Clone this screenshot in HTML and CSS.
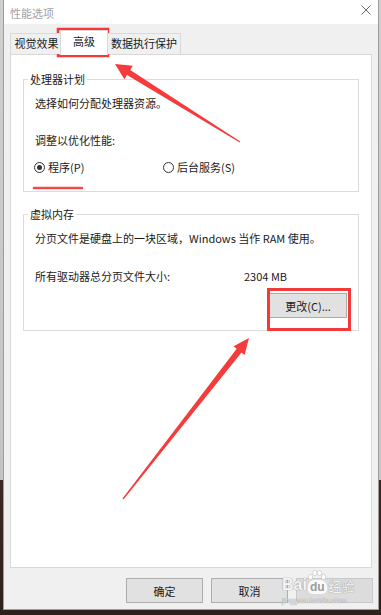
FILE: index.html
```html
<!DOCTYPE html>
<html lang="zh-CN">
<head>
    <meta charset="UTF-8">
    <title>性能选项</title>
    <link rel="stylesheet" href="styles.css">
</head>
<body>
    <div class="screen">
        <div class="window">
            <div class="titlebar">
                <span class="title">性能选项</span>
                <svg class="closebtn" width="10" height="10" viewBox="0 0 10 10">
                    <path d="M0.5 0.5 L9.5 9.5 M9.5 0.5 L0.5 9.5" stroke="#6a6a6a" stroke-width="1" fill="none"/>
                </svg>
            </div>
            <div class="dialog">
                <div class="tabs">
                    <div class="tab tab1">视觉效果</div>
                    <div class="tab tab2 active">高级</div>
                    <div class="tab tab3">数据执行保护</div>
                </div>
                <div class="panel">
                    <fieldset class="group group1">
                        <legend>处理器计划</legend>
                        <p class="line first">选择如何分配处理器资源。</p>
                        <p class="line gap21">调整以优化性能:</p>
                        <div class="radios">
                            <label class="radio radio-first"><span class="dot checked"></span>程序(P)</label>
                            <label class="radio"><span class="dot"></span>后台服务(S)</label>
                        </div>
                    </fieldset>
                    <fieldset class="group group2">
                        <legend>虚拟内存</legend>
                        <p class="line first">分页文件是硬盘上的一块区域，Windows 当作 RAM 使用。</p>
                        <div class="sizerow">
                            <span class="sizelabel">所有驱动器总分页文件大小:</span>
                            <span>2304 MB</span>
                        </div>
                        <div class="btnrow">
                            <button class="btn">更改(C)...</button>
                        </div>
                    </fieldset>
                </div>
                <div class="footer">
                    <button class="btn">确定</button>
                    <button class="btn">取消</button>
                    <button class="btn disabled"></button>
                </div>
            </div>
        </div>

        <svg class="marks" width="381" height="615" viewBox="0 0 381 615">
            <rect x="58" y="29" width="50" height="27" fill="none" stroke="#f23a3a" stroke-width="2.5"/>
            <rect x="268.5" y="289.5" width="81" height="40" fill="none" stroke="#f23a3a" stroke-width="3"/>
            <polygon fill="#f53b3b" points="115,64 132.8,65.7 130.2,69.9 240.3,141.6 239.7,142.4 127,75 124.4,79.3"/>
            <polygon fill="#f53b3b" points="249,338 244.6,354.9 241.5,352.4 123.5,499.4 122.5,498.6 236.7,348.8 233.6,346.3"/>
            <line x1="34" y1="188" x2="82" y2="188" stroke="#f54848" stroke-width="2.5" stroke-linecap="round"/>
        </svg>

        <div class="watermark">
            <div class="wm-top">
                <span>Bai</span>
                <span class="paw">
                    <svg class="toes" width="20" height="10" viewBox="0 0 20 10">
                        <g fill="#ffffff" stroke="#c0c0c0" stroke-width="0.6">
                            <ellipse cx="3.5" cy="7" rx="2.2" ry="2.6"/>
                            <ellipse cx="7.8" cy="3" rx="2.2" ry="2.6"/>
                            <ellipse cx="12.5" cy="3" rx="2.2" ry="2.6"/>
                            <ellipse cx="16.6" cy="7" rx="2.2" ry="2.6"/>
                        </g>
                    </svg>du</span>
                <span class="wm-cn">经验</span>
            </div>
            <div class="wm-url">jingyan.baidu.com</div>
        </div>
    </div>
</body>
</html>
```

FILE: styles.css
```css
body {
    margin: 0;
    font-family: "Noto Sans CJK SC", "Noto Sans", sans-serif;
    font-size: 11px;
    color: #1a1a1a;
}

.screen {
    position: relative;
    width: 381px;
    height: 615px;
    overflow: hidden;
    background: linear-gradient(#cfcfcf 0, #c4c4c4 78%, #3b2a22 78%, #2e211b 100%);
}

.window {
    margin-left: 3px;
    width: 376px;
    height: 610px;
    box-sizing: border-box;
    border: 1px solid #9d9d9d;
    border-top: none;
    background-color: #f0f0f0;
    display: flex;
    flex-direction: column;
}

.titlebar {
    height: 24px;
    flex: none;
    background-color: #fff;
    display: flex;
    align-items: center;
    justify-content: space-between;
    padding: 0 7px 0 6px;
}

.title {
    color: #a3a3a3;
    line-height: 14px;
    margin-top: 1px;
}

.closebtn {
    margin-top: -4px;
}

.dialog {
    flex: 1;
    display: flex;
    flex-direction: column;
    padding: 6px 6px 0 6px;
}

.tabs {
    height: 24px;
    display: flex;
    align-items: flex-end;
    position: relative;
    z-index: 1;
}

.tab {
    box-sizing: border-box;
    height: 21px;
    border: 1px solid #d9d9d9;
    border-bottom: none;
    background-color: #f0f0f0;
    text-align: center;
    line-height: 19px;
}

.tab1 {
    width: 50px;
    border-right: none;
    padding-left: 2px;
}

.tab2 {
    width: 48px;
}

.tab3 {
    width: 73px;
    border-left: none;
}

.tab.active {
    height: 25px;
    margin-bottom: -1px;
    background-color: #fff;
    line-height: 21px;
}

.panel {
    height: 514px;
    box-sizing: border-box;
    border: 1px solid #d9d9d9;
    background-color: #fff;
}

.group {
    margin: 0 12px;
    padding: 0 11px;
    border: 1px solid #dcdcdc;
    min-width: 0;
}

.group1 {
    margin-top: 17px;
    padding-bottom: 16px;
}

.group2 {
    margin-top: 15px;
    padding-bottom: 12px;
}

.group legend {
    margin-left: -7px;
    padding: 0 2px;
    line-height: 14px;
}

.line {
    margin: 0;
    line-height: 16px;
}

.line.first {
    margin-top: 9px;
}

.line.gap21 {
    margin-top: 21px;
}

.radios {
    display: flex;
    margin-top: 11px;
    margin-left: -1px;
    line-height: 16px;
}

.radio {
    display: flex;
    align-items: center;
}

.radio-first {
    width: 129px;
}

.dot {
    width: 11px;
    height: 11px;
    box-sizing: border-box;
    border: 1px solid #333;
    border-radius: 50%;
    margin-right: 3px;
    display: flex;
    align-items: center;
    justify-content: center;
}

.dot.checked::after {
    content: "";
    width: 5px;
    height: 5px;
    border-radius: 50%;
    background-color: #333;
}

.sizerow {
    display: flex;
    margin-top: 22px;
    line-height: 16px;
}

.sizelabel {
    width: 209px;
}

.btnrow {
    display: flex;
    justify-content: flex-end;
    margin-top: 9px;
}

.btn {
    width: 78px;
    height: 25px;
    box-sizing: border-box;
    border: 1px solid #adadad;
    background-color: #e1e1e1;
    font-family: inherit;
    font-size: 11px;
    color: #1a1a1a;
    padding: 0;
}

.btn.disabled {
    border-color: #c8c8c8;
    background-color: #dcdcdc;
}

.footer {
    display: flex;
    justify-content: flex-end;
    gap: 8px;
    margin-top: 10px;
    margin-right: -1px;
}

.footer .btn {
    width: 77px;
}

.marks {
    position: absolute;
    left: 0;
    top: 0;
    pointer-events: none;
}

.watermark {
    position: absolute;
    left: 282px;
    top: 576px;
    white-space: nowrap;
    color: rgba(255, 255, 255, 0.92);
    text-shadow: 0 0 1px #9a9a9a, 0 0 1px #9a9a9a;
    font-family: "Liberation Sans", sans-serif;
    pointer-events: none;
}

.wm-top {
    display: flex;
    align-items: flex-end;
    font-size: 16px;
    font-weight: bold;
    line-height: 18px;
}

.paw {
    position: relative;
    margin-left: 1px;
    padding: 0 2px;
    font-size: 12px;
    line-height: 14px;
    color: #9c9c9c;
    text-shadow: none;
    background-color: rgba(255, 255, 255, 0.85);
    border-radius: 7px 7px 5px 5px;
}

.toes {
    position: absolute;
    left: -1px;
    top: -10px;
}

.wm-cn {
    font-family: "Noto Sans CJK SC", sans-serif;
    font-size: 13px;
    font-weight: normal;
    line-height: 16px;
    margin-left: 2px;
}

.wm-url {
    font-size: 8px;
    line-height: 10px;
    color: rgba(255, 255, 255, 0.75);
    margin-top: 2px;
}
```
